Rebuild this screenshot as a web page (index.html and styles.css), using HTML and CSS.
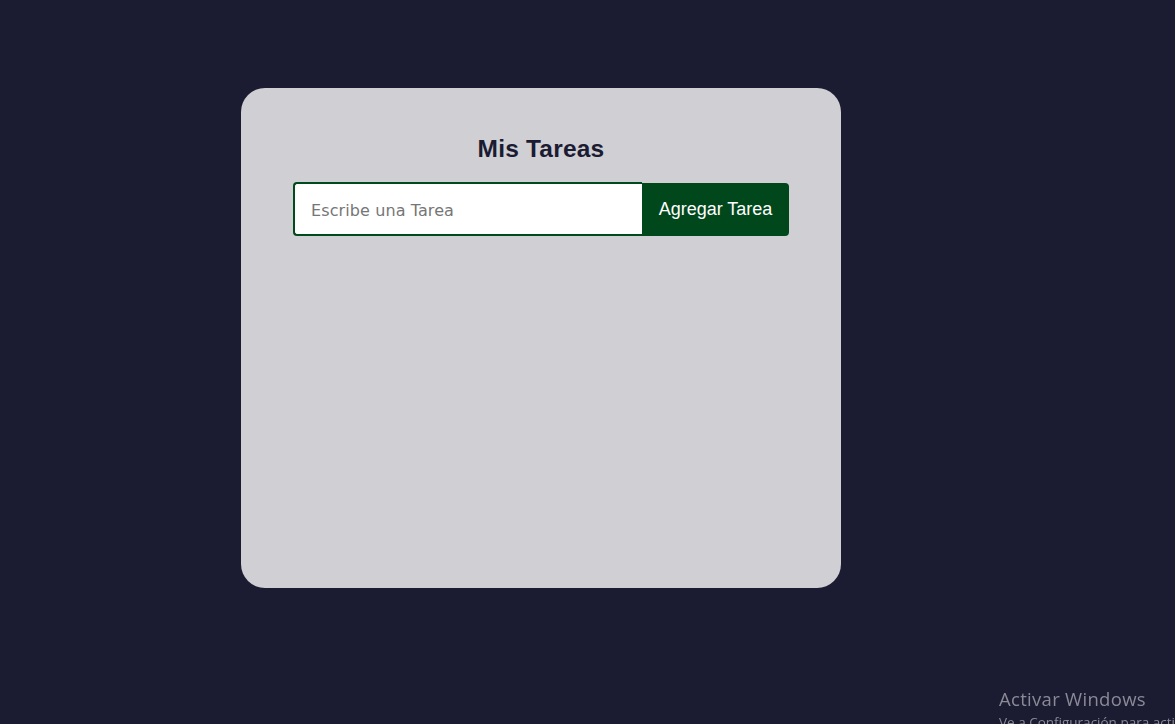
FILE: index.html
```html
<!DOCTYPE html>
<html lang="es">
<head>
<meta charset="utf-8">
<title>Mis Tareas</title>
<link rel="stylesheet" href="styles.css">
</head>
<body>
  <main class="card">
    <h1 class="title">Mis Tareas</h1>
    <form class="task-form" onsubmit="return false">
      <input class="task-input" type="text" placeholder="Escribe una Tarea" autofocus>
      <button class="task-btn" type="submit">Agregar Tarea</button>
    </form>
    <ul class="task-list"></ul>
  </main>
  <div class="watermark">
    <div class="wm-title">Activar Windows</div>
    <div class="wm-sub">Ve a Configuración para activar Windows.</div>
  </div>
</body>
</html>
```
FILE: styles.css
```css
* { box-sizing: border-box; }
html, body { height: 100%; }
body {
  margin: 0;
  background: #1b1b32;
  font-family: "Liberation Sans", Arial, sans-serif;
  overflow: hidden;
  padding-top: 88px;
  padding-left: 241px;
}
.card {
  width: 600px;
  height: 500px;
  background: #d0cfd4;
  border-radius: 24px;
  padding-top: 47px;
  display: flex;
  flex-direction: column;
  align-items: center;
}
.title {
  margin: 0;
  font-size: 24.5px;
  line-height: 28px;
  font-weight: 700;
  letter-spacing: 0.2px;
  color: #1b1b32;
}
.task-form {
  margin-top: 19px;
  display: flex;
  align-items: flex-end;
}
.task-input {
  width: 349px;
  height: 54px;
  border: 2px solid #004a1e;
  border-right: none;
  border-radius: 4px 0 0 4px;
  padding: 3px 0 0 16px;
  background: #fff;
  font-family: "DejaVu Sans", Verdana, sans-serif;
  font-size: 16px;
  letter-spacing: 0.1px;
  color: #222;
  outline: none;
}
.task-input::placeholder { color: #767676; }
.task-btn {
  width: 147px;
  height: 53px;
  border: none;
  border-radius: 0 4px 4px 0;
  background: #00471b;
  color: #fff;
  font-family: "Liberation Sans", Arial, sans-serif;
  font-size: 18px;
  padding: 0;
  cursor: pointer;
}
.task-list { margin: 0; padding: 0; list-style: none; }
.watermark {
  position: fixed;
  left: 999px;
  top: 687px;
  color: #8a8a96;
  font-family: "Open Sans", "Noto Sans", sans-serif;
  white-space: nowrap;
}
.wm-title { font-size: 18.5px; line-height: 24px; letter-spacing: 0.3px; }
.wm-sub { font-size: 13.5px; line-height: 18px; margin-top: 2px; }
```
